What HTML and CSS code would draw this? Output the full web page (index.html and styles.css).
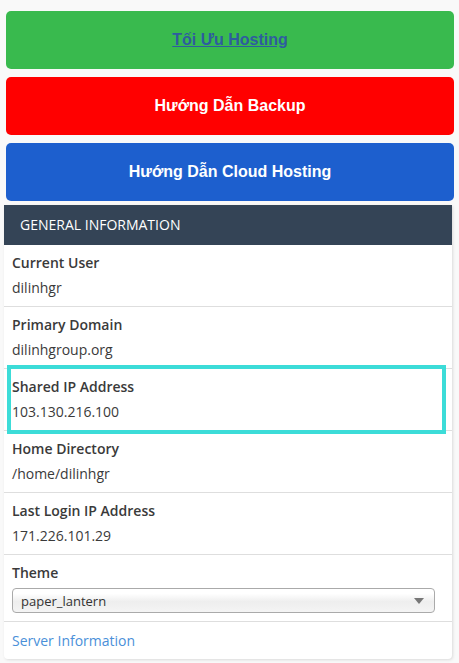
FILE: index.html
```html
<!DOCTYPE html>
<html lang="vi">
<head>
<meta charset="utf-8">
<title>General Information</title>
<link rel="stylesheet" href="styles.css">
</head>
<body>
<div class="page">
  <div class="buttons">
    <div class="btn btn-green"><a href="#" class="btn-link">Tối Ưu Hosting</a></div>
    <div class="btn btn-red"><span>Hướng Dẫn Backup</span></div>
    <div class="btn btn-blue"><span>Hướng Dẫn Cloud Hosting</span></div>
  </div>
  <div class="panel">
    <div class="panel-head">GENERAL INFORMATION</div>
    <div class="row">
      <div class="label">Current User</div>
      <div class="value">dilinhgr</div>
    </div>
    <div class="row">
      <div class="label">Primary Domain</div>
      <div class="value">dilinhgroup.org</div>
    </div>
    <div class="row row-hl">
      <div class="label">Shared IP Address</div>
      <div class="value">103.130.216.100</div>
      <div class="highlight"></div>
    </div>
    <div class="row">
      <div class="label">Home Directory</div>
      <div class="value">/home/dilinhgr</div>
    </div>
    <div class="row">
      <div class="label">Last Login IP Address</div>
      <div class="value">171.226.101.29</div>
    </div>
    <div class="row row-theme">
      <div class="label">Theme</div>
      <div class="select">
        <span>paper_lantern</span>
        <span class="caret"></span>
      </div>
    </div>
    <div class="row row-link">
      <a href="#" class="server-link">Server Information</a>
    </div>
  </div>
</div>
</body>
</html>
```

FILE: styles.css
```css
* { box-sizing: border-box; }
html, body { margin: 0; padding: 0; }
body {
  background: #f9f9f9;
  font-family: "Open Sans", "Liberation Sans", sans-serif;
  color: #333;
  width: 459px;
  height: 663px;
  overflow: hidden;
}
.page { padding-top: 11px; }
.buttons {
  margin-left: 6px;
  width: 448px;
  display: flex;
  flex-direction: column;
  gap: 8px;
}
.btn {
  height: 58px;
  border-radius: 5px;
  display: flex;
  align-items: center;
  justify-content: center;
  font-family: "Liberation Sans", Arial, sans-serif;
  font-weight: bold;
  font-size: 16px;
  color: #fff;
}
.btn-green { background: #39ba4e; }
.btn-red { background: #ff0000; }
.btn-blue { background: #1d5fce; }
.btn-link { color: #2e5c9f; text-decoration: underline; }
.panel {
  margin-top: 4px;
  margin-left: 4px;
  width: 448px;
  background: #fff;
  border-radius: 0 0 4px 4px;
  box-shadow: 1px 1px 3px rgba(0,0,0,0.12);
}
.panel-head {
  height: 40px;
  background: #344456;
  color: #fff;
  font-size: 14px;
  line-height: 40px;
  padding-left: 16px;
}
.row {
  padding: 8px 8px 7px 8px;
  border-bottom: 1px solid #dedede;
  height: 62px;
}
.row:first-of-type { height: 61px; }
.label {
  font-size: 14px;
  font-weight: 600;
  line-height: 20px;
  color: #3a3a3a;
}
.value {
  margin-top: 5px;
  font-size: 14px;
  line-height: 20px;
  color: #3a3a3a;
}
.row-hl { position: relative; }
.highlight {
  position: absolute;
  left: 3px;
  top: -4px;
  width: 439px;
  height: 69px;
  border: 4px solid #3cdcd8;
}
.row-theme { height: 67px; }
.select {
  margin-top: 5px;
  width: 423px;
  height: 25px;
  border: 1px solid #aaa;
  border-radius: 4px;
  background: linear-gradient(#ffffff 20%, #eeeeee 55%, #f4f4f4);
  display: flex;
  align-items: center;
  justify-content: space-between;
  padding: 0 10px 0 8px;
  font-size: 13px;
  color: #333;
}
.caret {
  width: 0;
  height: 0;
  border-left: 5px solid transparent;
  border-right: 5px solid transparent;
  border-top: 6px solid #777;
}
.row-link {
  height: 37px;
  border-bottom: none;
  padding-top: 7px;
}
.server-link {
  font-size: 14px;
  line-height: 20px;
  color: #4a90d9;
  text-decoration: none;
}
```
